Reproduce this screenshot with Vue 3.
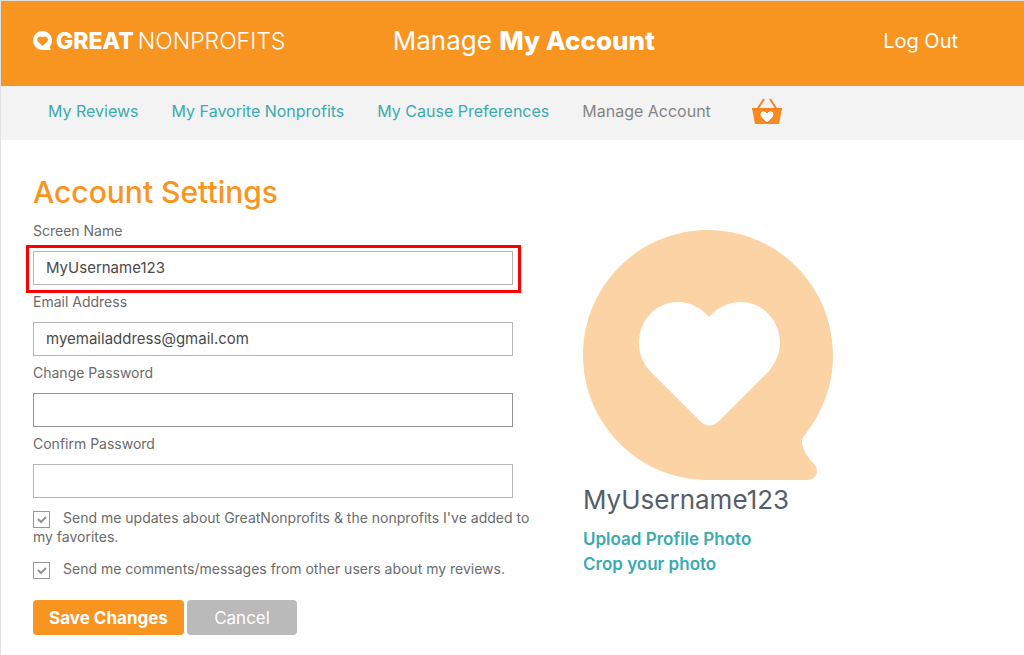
<script setup>
import { reactive } from 'vue'

const bubble =
  'M125 0C194 0 250 56 250 125C250 157 239 183 221 206Q218 210 219 214C221 222 226 229 231 234C237 240 233 250 225 250H125C56 250 0 194 0 125S56 0 125 0Z' +
  'M126 87C118 78 107 72 95 72C73 72 56 90 56 113C56 124 60 133 67 141L117 191Q126 200 136 191L186 141C192 133 197 124 197 113C197 90 179 72 158 72C145 72 134 78 126 87Z'

const form = reactive({
  screenName: 'MyUsername123',
  email: 'myemailaddress@gmail.com',
  password: '',
  confirm: '',
  updates: true,
  comments: true
})

const fields = [
  { id: 'screenName', label: 'Screen Name', type: 'text', highlight: true },
  { id: 'email', label: 'Email Address', type: 'text' },
  { id: 'password', label: 'Change Password', type: 'password', dark: true },
  { id: 'confirm', label: 'Confirm Password', type: 'password' }
]

const options = [
  { id: 'updates', label: "Send me updates about GreatNonprofits & the nonprofits I've added to my favorites." },
  { id: 'comments', label: 'Send me comments/messages from other users about my reviews.' }
]
</script>

<template>
  <div class="page">
    <header class="header">
      <a href="#" class="logo">
        <svg viewBox="0 0 250 250" class="logo-mark" aria-hidden="true">
          <path :d="bubble" fill="currentColor" fill-rule="evenodd" />
        </svg>
        <span class="logo-text"><b>GREAT</b><span class="thin">NONPROFITS</span></span>
      </a>
      <h1 class="title">Manage <b>My Account</b></h1>
      <a href="#" class="logout">Log Out</a>
    </header>

    <nav class="nav">
      <a href="#">My Reviews</a>
      <a href="#">My Favorite Nonprofits</a>
      <a href="#">My Cause Preferences</a>
      <a href="#" class="current">Manage Account</a>
      <a href="#" class="basket" aria-label="Basket">
        <svg viewBox="0 0 30 27" width="30" height="27">
          <path d="M5.5 11L12 1M24.500 11L18 1" fill="none" stroke="#f58220" stroke-width="2" />
          <path d="M0 10H30L27 26H3Z" fill="#f98a20" />
          <path d="M0 10H30V12H0Z" fill="#f58220" />
          <path d="M15 15C13 11.500 8 12.500 8 16.500C8 19.500 12 22 15 25C18 22 22 19.500 22 16.500C22 12.500 17 11.500 15 15Z" fill="#fff" stroke="#ee7512" stroke-width="1" />
        </svg>
      </a>
    </nav>

    <main class="content">
      <form class="settings" @submit.prevent>
        <h2>Account Settings</h2>
        <div v-for="f in fields" :key="f.id" class="field">
          <label :for="f.id">{{ f.label }}</label>
          <div class="control" :class="{ highlight: f.highlight }">
            <input :id="f.id" v-model="form[f.id]" :type="f.type" :class="{ dark: f.dark }" />
          </div>
        </div>
        <div v-for="o in options" :key="o.id" class="option">
          <input :id="o.id" v-model="form[o.id]" type="checkbox" /><label :for="o.id">{{ o.label }}</label>
        </div>
        <div class="actions">
          <button type="submit" class="save">Save Changes</button>
          <button type="button" class="cancel">Cancel</button>
        </div>
      </form>

      <aside class="profile">
        <svg viewBox="0 0 250 250" class="avatar" role="img" aria-label="Profile photo">
          <path :d="bubble" fill="#fcd3a4" fill-rule="evenodd" />
        </svg>
        <h3>MyUsername123</h3>
        <a href="#">Upload Profile Photo</a>
        <a href="#">Crop your photo</a>
      </aside>
    </main>
  </div>
</template>

<style>
body {
  margin: 0;
  background: #fff;
}
</style>

<style scoped>
.page {
  box-sizing: border-box;
  min-height: 100vh;
  border-top: 1px solid #e0e0e0;
  border-left: 1px solid #e0e0e0;
  font-family: Inter, "Open Sans", sans-serif;
  color: #6b6b6b;
}
a {
  text-decoration: none;
  color: #3aabb0;
}
.header {
  display: grid;
  grid-template-columns: 361fr auto 304fr;
  align-items: center;
  height: 85px;
  box-sizing: border-box;
  padding: 0 66px 6px 32px;
  background: #f89420;
  color: #fff;
}
.header a {
  color: #fff;
}
.logo {
  display: flex;
  align-items: center;
  gap: 4px;
}
.logo-mark {
  width: 19px;
  height: 19px;
}
.logo-text {
  display: flex;
  gap: 4px;
  font-size: 23px;
  line-height: 24px;
}
.logo-text b {
  font-weight: 800;
}
.thin {
  font-weight: 300;
}
.title {
  margin: 0;
  font-size: 26px;
  line-height: 32px;
  font-weight: 400;
}
.title b {
  font-weight: 800;
}
.logout {
  justify-self: end;
  font-size: 20px;
  line-height: 24px;
}
.nav {
  display: flex;
  align-items: center;
  gap: 33px;
  height: 54px;
  box-sizing: border-box;
  padding: 0 47px 4px;
  background: #f3f3f3;
  font-size: 16px;
  line-height: 20px;
}
.nav .current {
  color: #858585;
}
.basket {
  display: flex;
  margin-left: 8px;
}
.content {
  display: grid;
  grid-template-columns: 550fr 409fr;
  padding: 32px 32px 18px;
}
h2 {
  margin: 0 0 9px;
  font-size: 30px;
  line-height: 40px;
  font-weight: 500;
  color: #f89420;
}
.field {
  display: flex;
  flex-direction: column;
  gap: 10px;
  max-width: 480px;
  margin-bottom: 7px;
}
.field label {
  font-size: 14px;
  line-height: 20px;
}
.control {
  position: relative;
  display: flex;
}
.highlight::after {
  content: "";
  position: absolute;
  inset: -6px -8px -8px -7px;
  border: 3px solid #fe0000;
  pointer-events: none;
}
.field input {
  flex: 1;
  min-width: 0;
  height: 34px;
  box-sizing: border-box;
  padding: 0 12px 2px;
  border: 1px solid #b5b5b5;
  border-radius: 0;
  background: #fff;
  font: inherit;
  font-size: 15px;
  color: #4a4a4a;
  outline: none;
}
.field input.dark {
  border-color: #949494;
}
.option {
  max-width: 510px;
  margin: 10px 0 13px;
  font-size: 14px;
  line-height: 19px;
}
.option input {
  appearance: none;
  box-sizing: border-box;
  width: 17px;
  height: 17px;
  margin: -2px 13px -2px 0;
  border: 1px solid #999;
  vertical-align: -3px;
}
.option input:checked {
  background: #fff url("data:image/svg+xml,%3Csvg xmlns='http://www.w3.org/2000/svg' viewBox='0 0 15 15'%3E%3Cpath d='M4 7L7 10L12 5' fill='none' stroke='%23929292' stroke-width='2'/%3E%3C/svg%3E") center / 15px 15px no-repeat;
}
.actions {
  display: flex;
  gap: 3px;
  margin-top: 22px;
}
.actions button {
  height: 35px;
  border: 0;
  border-radius: 4px;
  padding: 0 12px;
  font: inherit;
  font-size: 17px;
  color: #fff;
}
.actions .save {
  min-width: 151px;
  background: #f89420;
  font-weight: 700;
}
.actions .cancel {
  min-width: 110px;
  background: #bababa;
}
.profile {
  display: flex;
  flex-direction: column;
  align-items: flex-start;
  padding-top: 58px;
  font-size: 17px;
  line-height: 25px;
  font-weight: 600;
}
.avatar {
  width: 100%;
  max-width: 250px;
}
h3 {
  margin: 4px 0 11px;
  font-size: 26px;
  line-height: 32px;
  font-weight: 400;
  color: #565d6a;
}
</style>
